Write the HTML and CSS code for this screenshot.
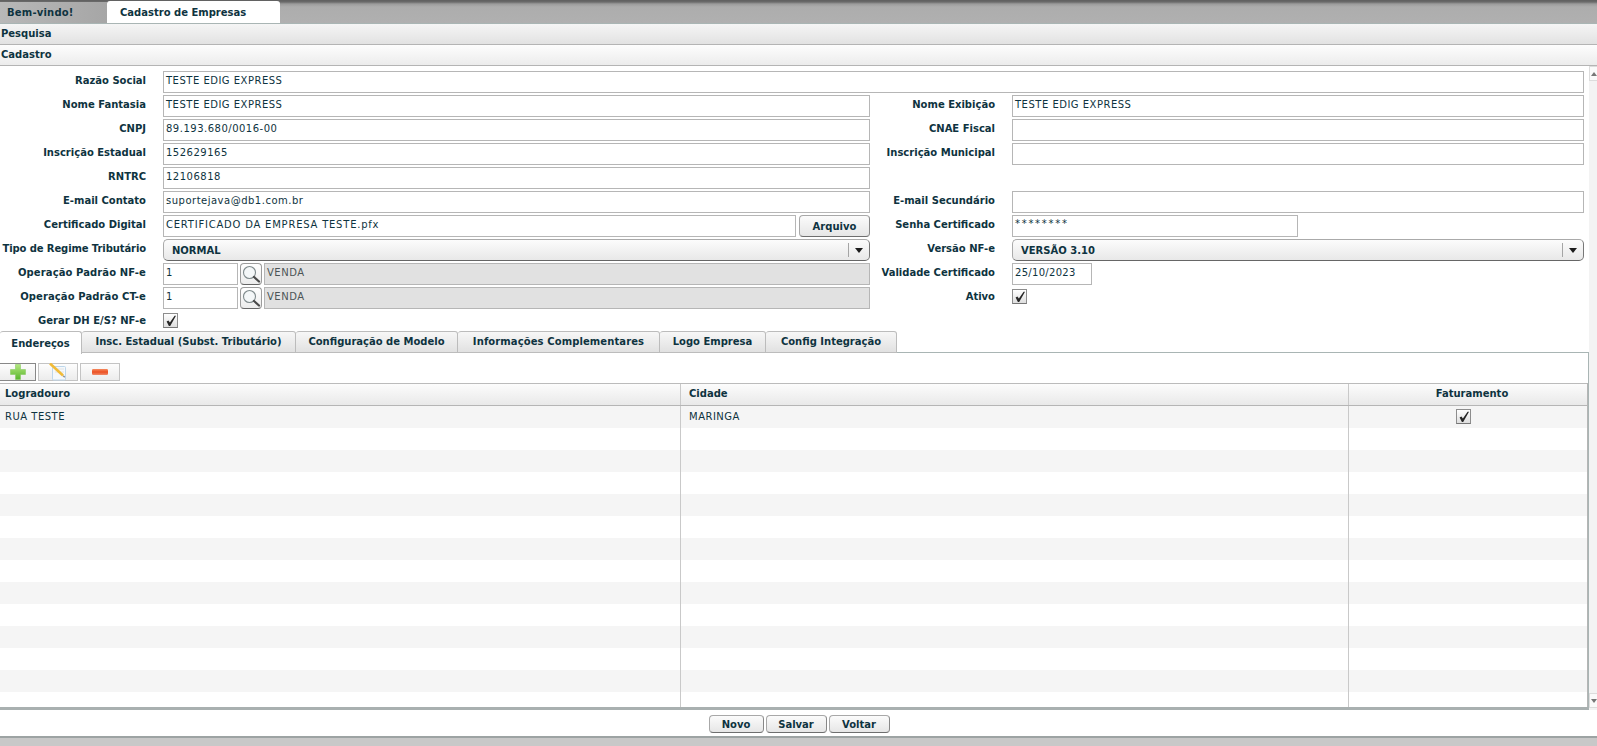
FILE: index.html
```html
<!DOCTYPE html>
<html lang="pt-BR">
<head>
<meta charset="utf-8">
<title>Cadastro de Empresas</title>
<link rel="stylesheet" href="styles.css">
</head>
<body>
<svg class="defs" width="0" height="0" aria-hidden="true">
  <defs>
    <linearGradient id="plusGrad" x1="0" y1="0" x2="0" y2="1"><stop offset="0" stop-color="#b4e77f"/><stop offset="1" stop-color="#58b52c"/></linearGradient>
    <linearGradient id="minusGrad" x1="0" y1="0" x2="0" y2="1"><stop offset="0" stop-color="#f58a5e"/><stop offset=".5" stop-color="#ec4f22"/><stop offset="1" stop-color="#f08a68"/></linearGradient>
    <symbol id="tick" viewBox="0 0 12 12"><path d="M1.6 6.4L3.4 5.4 4.9 7.6 9.6 0.8 11 0.8 5.2 11 3.9 11z" fill="#262626"/></symbol>
    <symbol id="glass" viewBox="0 0 20 20"><circle cx="8.5" cy="8.5" r="6" fill="#f4f7f8" stroke="#7f8a8c" stroke-width="1.1"/><path d="M13 13l5 4.5" stroke="#4a4a4a" stroke-width="2.2" stroke-linecap="round"/></symbol>
  </defs>
</svg>
<div class="app">
  <nav class="top-tabs">
    <div class="top-tab">Bem-vindo!</div>
    <div class="top-tab active">Cadastro de Empresas</div>
  </nav>
  <div class="section-bar first">Pesquisa</div>
  <div class="section-bar second">Cadastro</div>
  <main class="content">
    <div class="scroll-area">
      <form class="form">
        <label class="lbl">Razão Social</label>
        <div class="field span3">TESTE EDIG EXPRESS</div>

        <label class="lbl">Nome Fantasia</label>
        <div class="field">TESTE EDIG EXPRESS</div>
        <label class="lbl">Nome Exibição</label>
        <div class="field">TESTE EDIG EXPRESS</div>

        <label class="lbl">CNPJ</label>
        <div class="field">89.193.680/0016-00</div>
        <label class="lbl">CNAE Fiscal</label>
        <div class="field"></div>

        <label class="lbl">Inscrição Estadual</label>
        <div class="field">152629165</div>
        <label class="lbl">Inscrição Municipal</label>
        <div class="field"></div>

        <label class="lbl">RNTRC</label>
        <div class="field">12106818</div>
        <span></span><span></span>

        <label class="lbl">E-mail Contato</label>
        <div class="field">suportejava@db1.com.br</div>
        <label class="lbl">E-mail Secundário</label>
        <div class="field"></div>

        <label class="lbl">Certificado Digital</label>
        <div class="combo">
          <div class="field grow wide">CERTIFICADO DA EMPRESA TESTE.pfx</div>
          <button type="button" class="btn file-btn">Arquivo</button>
        </div>
        <label class="lbl">Senha Certificado</label>
        <div class="combo"><div class="field pass">********</div></div>

        <label class="lbl tight">Tipo de Regime Tributário</label>
        <div class="select"><span>NORMAL</span><i class="caret"></i></div>
        <label class="lbl">Versão NF-e</label>
        <div class="select"><span>VERSÃO 3.10</span><i class="caret"></i></div>

        <label class="lbl loose">Operação Padrão NF-e</label>
        <div class="combo">
          <div class="field code">1</div>
          <button type="button" class="lens" aria-label="Buscar"><svg width="20" height="20"><use href="#glass"/></svg></button>
          <div class="field grow disabled">VENDA</div>
        </div>
        <label class="lbl">Validade Certificado</label>
        <div class="combo"><div class="field date">25/10/2023</div></div>

        <label class="lbl loose">Operação Padrão CT-e</label>
        <div class="combo">
          <div class="field code">1</div>
          <button type="button" class="lens" aria-label="Buscar"><svg width="20" height="20"><use href="#glass"/></svg></button>
          <div class="field grow disabled">VENDA</div>
        </div>
        <label class="lbl">Ativo</label>
        <div class="check-cell"><span class="check"><svg width="12" height="12"><use href="#tick"/></svg></span></div>

        <label class="lbl">Gerar DH E/S? NF-e</label>
        <div class="check-cell"><span class="check"><svg width="12" height="12"><use href="#tick"/></svg></span></div>
        <span></span><span></span>
      </form>

      <div class="tabs">
        <div class="tab active">Endereços</div>
        <div class="tab">Insc. Estadual (Subst. Tributário)</div>
        <div class="tab">Configuração de Modelo</div>
        <div class="tab">Informações Complementares</div>
        <div class="tab">Logo Empresa</div>
        <div class="tab">Config Integração</div>
      </div>
      <section class="panel">
        <div class="toolbar">
          <button type="button" class="tool first-tool" aria-label="Adicionar"><svg width="16" height="16" viewBox="0 0 16 16"><path d="M5.5 .5h5v5h5v5h-5v5h-5v-5h-5v-5h5z" fill="url(#plusGrad)" stroke="#7fc455" stroke-width=".5"/></svg></button>
          <button type="button" class="tool" aria-label="Editar"><svg width="18" height="18" viewBox="0 0 18 18"><rect x="3.5" y="3.5" width="13" height="13.5" rx="1" fill="#f4f8fb" stroke="#bdd6ea"/><path d="M6 6h9M6 9h9" stroke="#e2e2e2"/><path d="M1 .5l13 12" stroke="#f1bb38" stroke-width="2.6"/><path d="M14.2 12.7l1.6 1.5" stroke="#8c8c8c" stroke-width="1.4"/></svg></button>
          <button type="button" class="tool" aria-label="Remover"><svg width="16" height="6" viewBox="0 0 16 6"><rect width="16" height="6" rx="1.2" fill="url(#minusGrad)"/></svg></button>
        </div>
        <div class="grid">
          <div class="grid-row head">
            <div class="cell">Logradouro</div>
            <div class="cell">Cidade</div>
            <div class="cell center head-flag">Faturamento</div>
          </div>
          <div class="grid-row odd">
            <div class="cell">RUA TESTE</div>
            <div class="cell">MARINGA</div>
            <div class="cell center flag"><span class="check"><svg width="12" height="12"><use href="#tick"/></svg></span></div>
          </div>
          <div class="grid-row"><div class="cell"></div><div class="cell"></div><div class="cell"></div></div>
          <div class="grid-row odd"><div class="cell"></div><div class="cell"></div><div class="cell"></div></div>
          <div class="grid-row"><div class="cell"></div><div class="cell"></div><div class="cell"></div></div>
          <div class="grid-row odd"><div class="cell"></div><div class="cell"></div><div class="cell"></div></div>
          <div class="grid-row"><div class="cell"></div><div class="cell"></div><div class="cell"></div></div>
          <div class="grid-row odd"><div class="cell"></div><div class="cell"></div><div class="cell"></div></div>
          <div class="grid-row"><div class="cell"></div><div class="cell"></div><div class="cell"></div></div>
          <div class="grid-row odd"><div class="cell"></div><div class="cell"></div><div class="cell"></div></div>
          <div class="grid-row"><div class="cell"></div><div class="cell"></div><div class="cell"></div></div>
          <div class="grid-row odd"><div class="cell"></div><div class="cell"></div><div class="cell"></div></div>
          <div class="grid-row"><div class="cell"></div><div class="cell"></div><div class="cell"></div></div>
          <div class="grid-row odd"><div class="cell"></div><div class="cell"></div><div class="cell"></div></div>
          <div class="grid-row"><div class="cell"></div><div class="cell"></div><div class="cell"></div></div>
        </div>
      </section>
    </div>
    <aside class="scrollbar">
      <span class="sb-btn"><i class="arrow up"></i></span>
      <span class="sb-btn"><i class="arrow down"></i></span>
    </aside>
  </main>
  <footer class="actions">
    <button type="button" class="btn act novo">Novo</button>
    <button type="button" class="btn act salvar">Salvar</button>
    <button type="button" class="btn act voltar">Voltar</button>
  </footer>
  <div class="status"></div>
</div>
</body>
</html>
```
FILE: styles.css
```css
* { box-sizing: border-box; }
html, body { margin: 0; height: 100%; overflow: hidden; }
body {
  font-family: "DejaVu Sans", Verdana, sans-serif;
  font-size: 10px;
  color: #0e3340;
  background: #fff;
}
.defs { display: block; height: 0; }
.app { display: flex; flex-direction: column; height: 746px; }

.top-tabs {
  height: 24px;
  flex: none;
  display: flex;
  background: linear-gradient(#5f5f5f 0, #6b6b6b 2px, #9c9c9c 4px, #adadad 7px, #b0b0b0 100%);
  border-bottom: 1px solid #a9b5b4;
}
.top-tab {
  width: 107px;
  padding: 5px 0 0 7px;
  font-weight: bold;
  letter-spacing: .2px;
  background: linear-gradient(90deg, #b8b8b8, #a6a6a6);
  margin-top: 2px;
}
.top-tab.active {
  width: 173px;
  padding: 6px 0 0 13px;
  margin-top: 1px;
  letter-spacing: 0;
  background: #fff;
  border-radius: 3px 3px 0 0;
}
.section-bar {
  height: 21px;
  flex: none;
  padding: 4px 0 0 1px;
  font-weight: bold;
  background: linear-gradient(#f5f5f5, #e2e2e2);
  border-bottom: 1px solid #b4b4b4;
}
.section-bar.second { background: linear-gradient(#fdfdfd, #ececec); }

.content { flex: 1; min-height: 0; display: flex; }
.scroll-area { width: 1589px; flex: none; display: flex; flex-direction: column; min-height: 0; overflow: hidden; }
.scrollbar {
  flex: 1;
  background: #f3f3f3;
  display: flex;
  flex-direction: column;
  justify-content: space-between;
  padding-bottom: 2px;
}
.sb-btn {
  height: 15px;
  background: #fafafa;
  border: 1px solid #dcdcdc;
  border-right: 0;
  display: flex;
  align-items: center;
  justify-content: center;
}
.arrow { width: 0; height: 0; border-left: 3px solid transparent; border-right: 3px solid transparent; }
.arrow.up { border-bottom: 4px solid #777; }
.arrow.down { border-top: 4px solid #777; }

.form {
  display: grid;
  grid-template-columns: 163px 707px 142px 572px;
  grid-auto-rows: 24px;
  padding-top: 5px;
  flex: none;
  height: 263px;
}
.lbl {
  font-weight: bold;
  text-align: right;
  padding: 4px 17px 0 0;
  white-space: nowrap;
}
.tight { letter-spacing: -.1px; }
.loose { letter-spacing: .1px; }
.field {
  height: 22px;
  border: 1px solid #b6b6b6;
  background: #fff;
  padding: 2px 0 0 2px;
  line-height: 13px;
  letter-spacing: .5px;
  white-space: nowrap;
}
.span3 { grid-column: span 3; }
.combo { display: flex; align-items: flex-start; }
.grow { flex: 1; min-width: 0; }
.wide { letter-spacing: .78px; }
.pass { width: 286px; letter-spacing: 1.7px; padding-top: 1px; }
.date { width: 80px; letter-spacing: .3px; }
.code { width: 75px; }
.disabled { background: #e1e1e1; color: #4c5556; }
.btn {
  font: bold 10px "DejaVu Sans", Verdana, sans-serif;
  color: #0e3340;
  background: linear-gradient(#fbfbfb, #e6e6e6);
  border: 1px solid #a8a8a8;
  border-bottom-color: #6e6e6e;
  border-right-color: #888;
  border-radius: 4px;
  padding: 0;
}
.file-btn { width: 71px; height: 22px; margin-left: 3px; }
.lens {
  width: 22px;
  height: 22px;
  margin: 0 2px;
  padding: 0;
  background: linear-gradient(#fff, #ececec);
  border: 1px solid #9c9c9c;
  border-bottom-color: #666;
  border-radius: 4px;
  display: flex;
  align-items: center;
  justify-content: center;
}
.select {
  height: 22px;
  border: 1px solid #aaa;
  border-bottom-color: #666;
  border-right-color: #777;
  border-radius: 5px;
  background: linear-gradient(#fcfcfc, #e8e8e8);
  font-weight: bold;
  display: flex;
  align-items: center;
  justify-content: space-between;
  padding-left: 8px;
}
.caret {
  width: 21px;
  height: 14px;
  border-left: 1px solid #a5a5a5;
  position: relative;
}
.caret::after {
  content: "";
  position: absolute;
  left: 6px;
  top: 5px;
  border-left: 4px solid transparent;
  border-right: 4px solid transparent;
  border-top: 5px solid #1c1c1c;
}
.check-cell { padding-top: 2px; }
.check {
  display: inline-flex;
  width: 15px;
  height: 15px;
  align-items: center;
  justify-content: center;
  border: 1px solid #8d8d8d;
  border-bottom-color: #777;
  background: linear-gradient(#fff, #dedede);
}

.tabs {
  display: flex;
  height: 22px;
  flex: none;
  border-bottom: 1px solid #a9b5b4;
  margin-top: 2px;
  position: relative;
}
.tab {
  padding: 4px 0 0;
  text-align: center;
  font-weight: bold;
  border: 1px solid #bcbcbc;
  border-left: 0;
  border-radius: 3px 3px 0 0;
  background: linear-gradient(#f7f7f7, #e1e1e1);
  height: 22px;
  white-space: nowrap;
}
.tab:nth-child(2) { width: 214px; }
.tab:nth-child(3) { width: 162px; }
.tab:nth-child(4) { width: 202px; letter-spacing: .1px; }
.tab:nth-child(5) { width: 106px; }
.tab:nth-child(6) { width: 131px; }
.tab.active {
  background: #fff;
  width: 82px;
  padding: 6px 0 0;
  height: 23px;
  border-bottom: 0;
  position: relative;
  z-index: 1;
}
.panel {
  flex: 1;
  min-height: 0;
  border-right: 1px solid #a9b5b4;
  overflow: hidden;
  display: flex;
  flex-direction: column;
  padding-top: 10px;
  position: relative;
  border-bottom: 3px solid #a9b0b0;
}
.toolbar { display: flex; gap: 2px; height: 20px; flex: none; }
.tool {
  width: 40px;
  height: 18px;
  padding: 0;
  background: linear-gradient(#fdfdfd, #ececec);
  border: 1px solid #c4c4c4;
  display: flex;
  align-items: center;
  justify-content: center;
}
.first-tool { width: 36px; border-color: #888; border-left: 0; }
.grid { flex: 1; min-height: 0; overflow: hidden; border-right: 1px solid #b5b5b5; }
.grid-row {
  display: grid;
  grid-template-columns: 681px 668px 1fr;
  height: 22px;
}
.grid-row.odd { background: #f5f5f5; }
.head {
  height: 23px;
  font-weight: bold;
  background: linear-gradient(#fcfcfc, #e9e9e9);
  border-top: 1px solid #bbb;
  border-bottom: 1px solid #b5b5b5;
}
.cell {
  padding: 4px 0 0 5px;
  border-right: 1px solid #c9c9c9;
  line-height: 13px;
  letter-spacing: .5px;
  overflow: hidden;
}
.cell:nth-child(2) { padding-left: 8px; }
.cell:last-child { border-right: 0; }
.head .cell { padding-top: 3px; letter-spacing: 0; }
.center { text-align: center; padding-left: 0; }
.head .head-flag { padding-left: 8px; }
.flag { padding: 3px 9px 0 0; }

.actions {
  flex: none;
  height: 26px;
  display: flex;
  justify-content: center;
  gap: 2px;
  padding: 5px 0 0 1px;
}
.act { height: 18px; }
.novo { width: 55px; }
.salvar { width: 61px; }
.voltar { width: 61px; }
.status {
  flex: none;
  height: 10px;
  background: #c8c8c8;
  border-top: 2px solid #9da3a3;
}
```
